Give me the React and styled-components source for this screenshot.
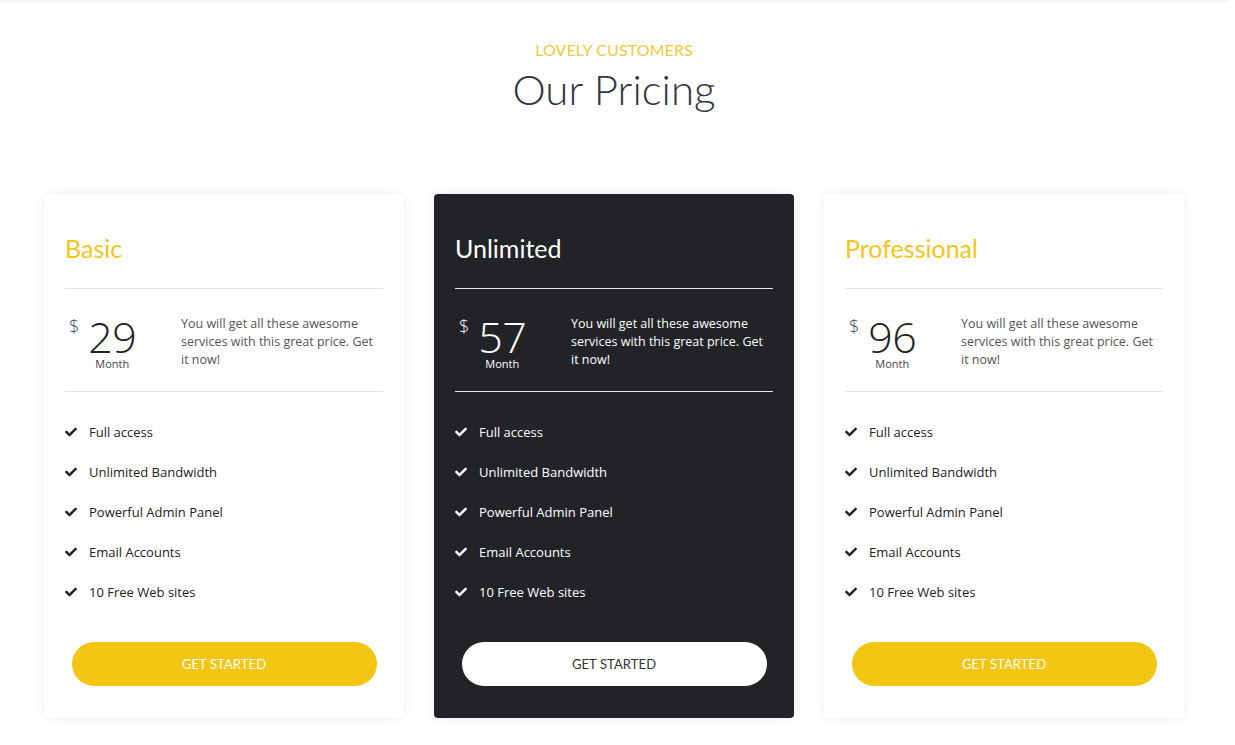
import React from "react";
import styled, { createGlobalStyle } from "styled-components";
import { FaCheck } from "react-icons/fa";

const Global = createGlobalStyle`
  html, body { margin: 0; padding: 0; background: #fff; }
  body { font-family: "Open Sans", "Liberation Sans", sans-serif; }
  * { box-sizing: border-box; }
`;

const Page = styled.div`
  position: relative;
  width: 1235px;
  min-height: 745px;
  padding-right: 7px;
  overflow: hidden;
`;

const TopShadow = styled.div`
  height: 1px;
  box-shadow: 0 0 4px rgba(0, 0, 0, 0.12);
  background: #f4f4f4;
`;

const Header = styled.header`
  display: flex;
  flex-direction: column;
  align-items: center;
  padding-top: 39px;
`;

const Eyebrow = styled.div`
  font-family: "Lato", "Open Sans", sans-serif;
  font-size: 16px;
  line-height: 20px;
  color: #f5c83a;
  letter-spacing: 0.1px;
`;

const Title = styled.h2`
  margin: 4px 0 0;
  font-family: "Lato", sans-serif;
  font-weight: 300;
  font-size: 42px;
  line-height: 50px;
  color: #33353f;
`;

const Cards = styled.div`
  display: flex;
  justify-content: center;
  gap: 30px;
  margin-top: 80px;
`;

const Card = styled.div`
  width: 360px;
  height: 524px;
  border-radius: 4px;
  padding: 36px 21px 0 21px;
  background: ${(p) => (p.$dark ? "#222327" : "#fff")};
  color: ${(p) => (p.$dark ? "#fff" : "#222")};
  box-shadow: 0 0 12px rgba(0, 0, 0, 0.07);
  display: flex;
  flex-direction: column;
`;

const PlanName = styled.h3`
  margin: 0;
  font-family: "Lato", sans-serif;
  font-weight: 400;
  font-size: 25px;
  line-height: 36px;
  color: ${(p) => (p.$dark ? "#fff" : "#f5c518")};
  padding-bottom: 22px;
  border-bottom: 1px solid ${(p) => (p.$dark ? "#e8e8e8" : "#e2e2e2")};
`;

const PriceRow = styled.div`
  display: flex;
  align-items: flex-start;
  padding: 26px 0 20px;
  border-bottom: 1px solid ${(p) => (p.$dark ? "#e8e8e8" : "#e2e2e2")};
`;

const PriceBlock = styled.div`
  width: 116px;
  flex: none;
  display: flex;
  padding-left: 4px;
`;

const Currency = styled.span`
  font-size: 18px;
  line-height: 20px;
  margin-top: 1px;
  font-weight: 300;
  color: ${(p) => (p.$dark ? "#fff" : "#35496b")};
`;

const Amount = styled.div`
  display: flex;
  flex-direction: column;
  align-items: center;
  margin-left: 9px;
`;

const Number = styled.span`
  font-size: 43px;
  line-height: 40px;
  margin-top: 2px;
  font-weight: 300;
  letter-spacing: -0.5px;
  color: ${(p) => (p.$dark ? "#fff" : "#222")};
`;

const Period = styled.span`
  font-size: 11px;
  line-height: 14px;
  margin-top: 0;
  color: ${(p) => (p.$dark ? "#fff" : "#444")};
`;

const Desc = styled.p`
  margin: 0;
  font-size: 12.5px;
  line-height: 18px;
  color: ${(p) => (p.$dark ? "#fff" : "#555")};
  padding-right: 4px;
`;

const Features = styled.ul`
  list-style: none;
  margin: 0;
  padding: 20px 0 0 0;
`;

const Feature = styled.li`
  display: flex;
  align-items: center;
  height: 40px;
  font-size: 13px;
  color: ${(p) => (p.$dark ? "#fff" : "#222")};
  svg {
    width: 12px;
    height: 12px;
    margin: 0 12px 0 0;
    color: ${(p) => (p.$dark ? "#fff" : "#222")};
  }
`;

const Button = styled.button`
  margin: 30px auto 0;
  width: 305px;
  height: 44px;
  border: none;
  border-radius: 22px;
  background: ${(p) => (p.$dark ? "#fff" : "#f4c614")};
  color: ${(p) => (p.$dark ? "#333" : "#fff")};
  font-family: "Lato", sans-serif;
  font-size: 13px;
  letter-spacing: 0.1px;
  cursor: pointer;
`;

const plans = [
  { name: "Basic", price: "29" },
  { name: "Unlimited", price: "57", dark: true },
  { name: "Professional", price: "96" },
];

const features = [
  "Full access",
  "Unlimited Bandwidth",
  "Powerful Admin Panel",
  "Email Accounts",
  "10 Free Web sites",
];

export default function App() {
  return (
    <Page>
      <Global />
      <TopShadow />
      <Header>
        <Eyebrow>LOVELY CUSTOMERS</Eyebrow>
        <Title>Our Pricing</Title>
      </Header>
      <Cards>
        {plans.map((p) => (
          <Card key={p.name} $dark={p.dark}>
            <PlanName $dark={p.dark}>{p.name}</PlanName>
            <PriceRow $dark={p.dark}>
              <PriceBlock>
                <Currency $dark={p.dark}>$</Currency>
                <Amount>
                  <Number $dark={p.dark}>{p.price}</Number>
                  <Period $dark={p.dark}>Month</Period>
                </Amount>
              </PriceBlock>
              <Desc $dark={p.dark}>
                You will get all these awesome services with this great price. Get it now!
              </Desc>
            </PriceRow>
            <Features>
              {features.map((f) => (
                <Feature key={f} $dark={p.dark}>
                  <FaCheck />
                  {f}
                </Feature>
              ))}
            </Features>
            <Button $dark={p.dark}>GET STARTED</Button>
          </Card>
        ))}
      </Cards>
    </Page>
  );
}
